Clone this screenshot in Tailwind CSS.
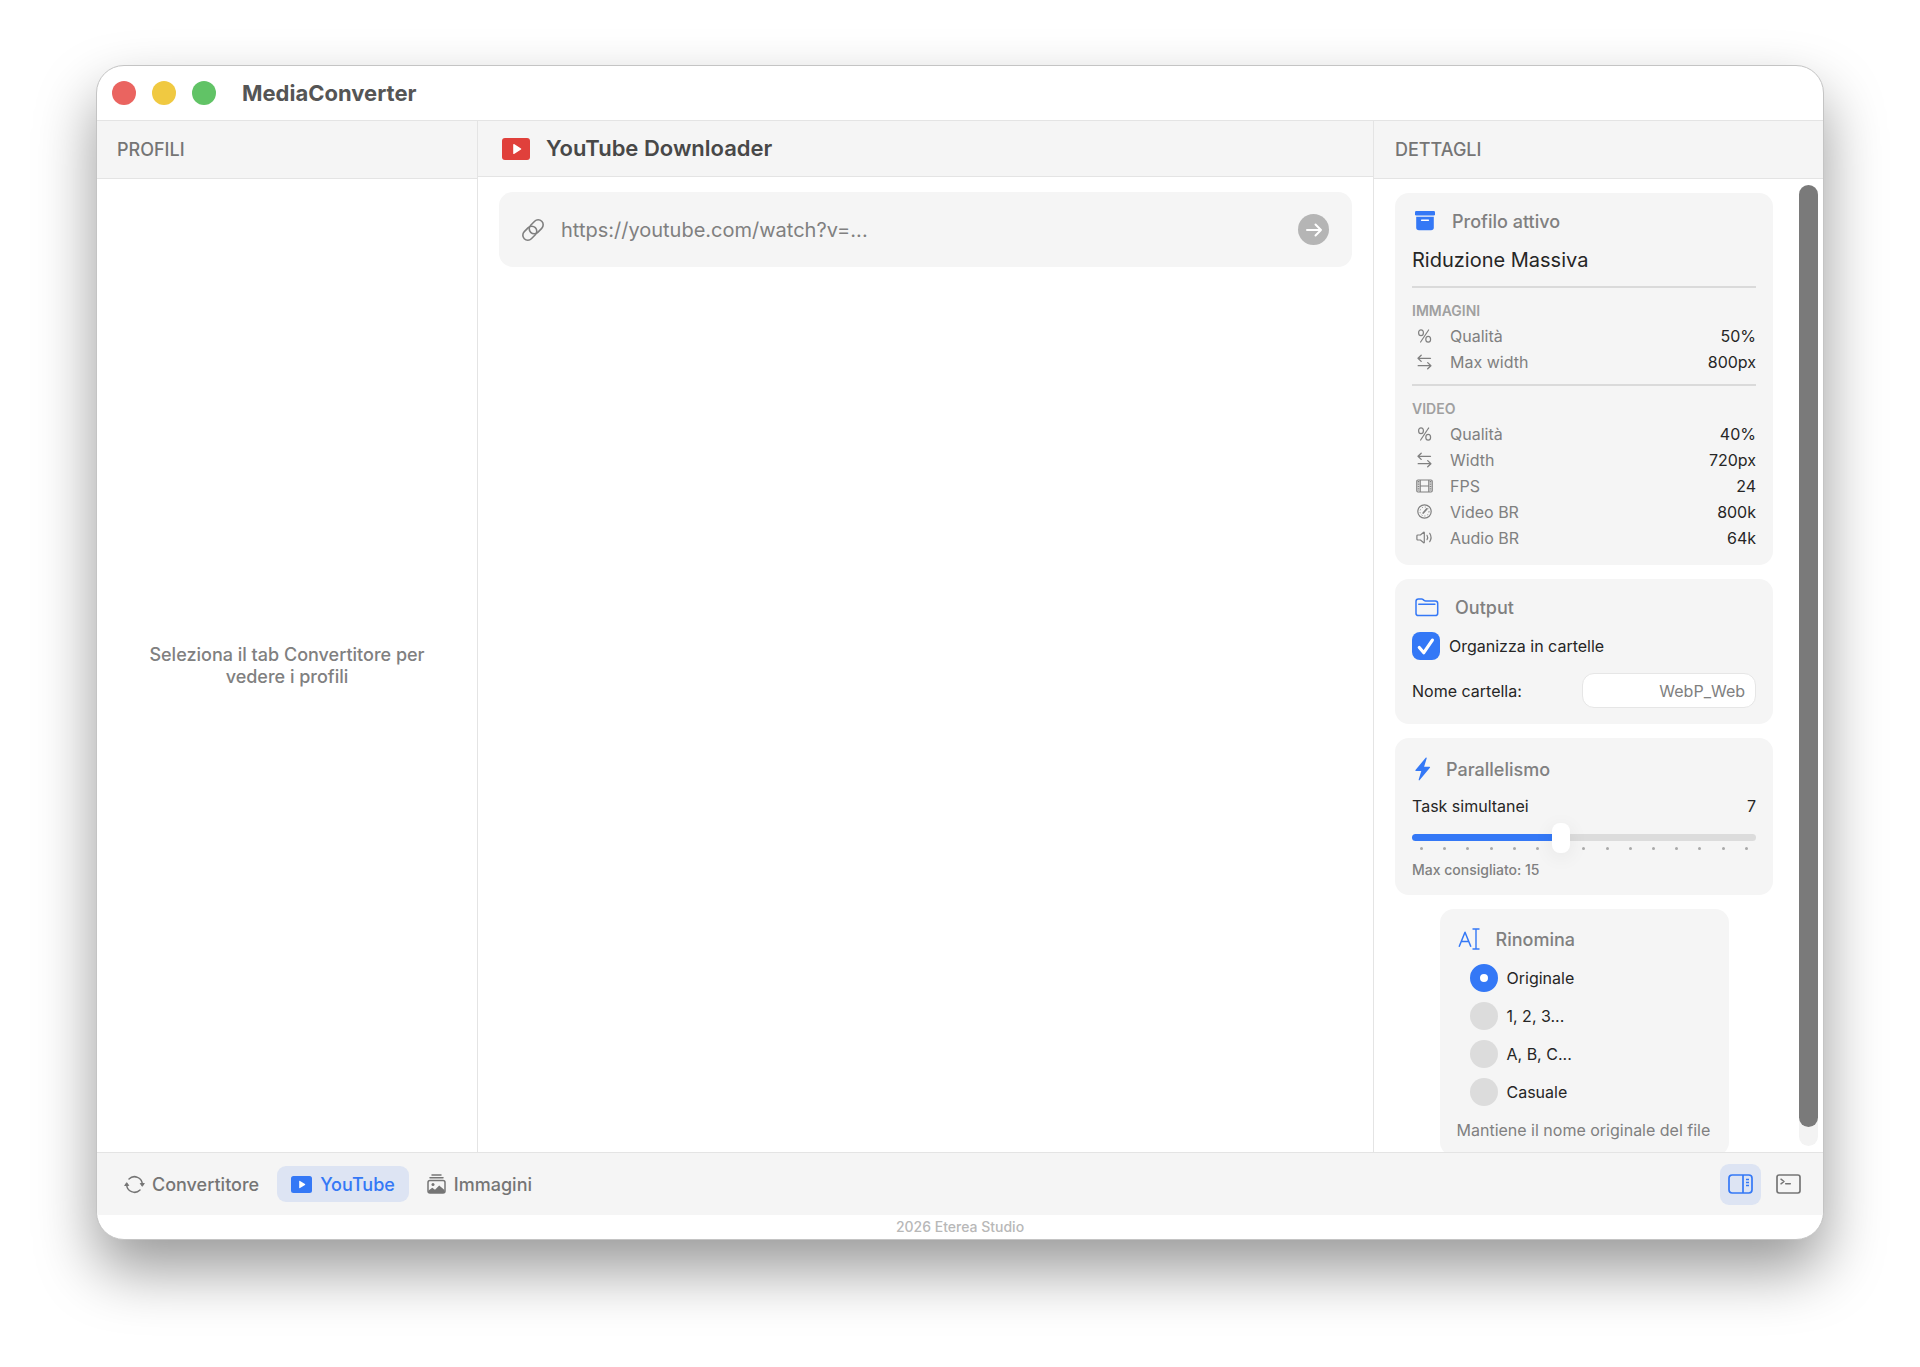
<!DOCTYPE html>
<html lang="it">
<head>
  <meta charset="UTF-8">
  <meta name="viewport" content="width=device-width, initial-scale=1.0">
  <title>MediaConverter</title>
  <script src="https://cdn.jsdelivr.net/npm/@tailwindcss/browser@4"></script>
</head>
<body class="h-screen overflow-hidden bg-white px-24 pt-[65px] pb-[127px] font-['Inter',sans-serif] text-[#262626]">
  <div class="flex h-full flex-col overflow-hidden rounded-[28px] border border-[#c4c4c4] bg-white shadow-[0_30px_60px_rgba(0,0,0,0.4)]">

    <!-- Title bar -->
    <header class="flex h-[55px] shrink-0 items-center border-b border-[#e4e4e4] pl-[15px]">
      <div class="flex gap-4">
        <button aria-label="Chiudi" class="size-6 rounded-full bg-[#ea6460]"></button>
        <button aria-label="Riduci" class="size-6 rounded-full bg-[#f0c941]"></button>
        <button aria-label="Ingrandisci" class="size-6 rounded-full bg-[#61c366]"></button>
      </div>
      <h1 class="ml-[26px] text-[22px] font-bold text-[#555555]">MediaConverter</h1>
    </header>

    <div class="flex min-h-0 flex-1">
      <!-- Profiles -->
      <aside class="flex w-[381px] shrink-0 flex-col border-r border-[#e4e4e4]">
        <h2 class="flex h-[58px] shrink-0 items-center border-b border-[#e4e4e4] bg-[#f5f5f5] pl-5 text-[18px] font-medium text-[#757575]">PROFILI</h2>
        <div class="flex flex-1 items-center justify-center px-12">
          <p class="text-center text-[18px] leading-[22px] font-medium text-[#808080]">Seleziona il tab Convertitore per<br>vedere i profili</p>
        </div>
      </aside>

      <!-- Downloader -->
      <main class="min-w-0 flex-1">
        <div class="flex h-14 items-center gap-4 border-b border-[#e4e4e4] bg-[#f5f5f5] pl-6">
          <svg class="h-[22px] w-7" viewBox="0 0 28 22"><rect width="28" height="22" rx="3" fill="#e0403b"/><path d="M11.200 6.600v8.800c0 .5.500.7.900.5l6.900-4.300c.4-.3.400-.8 0-1.100L12.100 6.100c-.4-.2-.9 0-.9.500z" fill="#fff"/></svg>
          <h2 class="text-[22px] font-semibold text-[#484848]">YouTube Downloader</h2>
        </div>
        <form class="mx-[21px] mt-[15px] flex h-[75px] items-center rounded-[14px] bg-[#f5f5f5] pr-[23px] pl-[22px]">
          <svg class="size-6 shrink-0" viewBox="0 0 24 24" fill="none" stroke="#7f7f7f" stroke-width="1.600"><rect x="-7.800" y="-5" width="15.600" height="10" rx="5" transform="translate(15.200 8.800) rotate(-45)"/><rect x="-7.800" y="-5" width="15.600" height="10" rx="5" transform="translate(8.800 15.200) rotate(-45)"/></svg>
          <input type="text" aria-label="URL del video" placeholder="https://youtube.com/watch?v=..." class="ml-4 min-w-0 flex-1 text-[20px] outline-none placeholder:text-[#808080]">
          <button type="button" aria-label="Avvia" class="flex size-[31px] items-center justify-center rounded-full bg-[#b5b5b5]">
            <svg class="size-[18px]" viewBox="0 0 18 18" fill="none" stroke="#fff" stroke-width="2" stroke-linecap="round" stroke-linejoin="round"><path d="M2 9h14M10.500 3.500 16 9l-5.500 5.500"/></svg>
          </button>
        </form>
      </main>

      <!-- Details -->
      <aside class="flex w-[450px] shrink-0 flex-col border-l border-[#e4e4e4]">
        <h2 class="flex h-[58px] shrink-0 items-center border-b border-[#e4e4e4] bg-[#f5f5f5] pl-[21px] text-[18px] font-medium text-[#757575]">DETTAGLI</h2>
        <div class="flex min-h-0 flex-1 pr-[5px]">
          <div class="flex min-w-0 flex-1 flex-col gap-[14px] overflow-hidden pt-[14px] pr-[26px] pl-[21px] text-[16px]">

            <section class="shrink-0 rounded-[14px] bg-[#f5f5f5] px-[17px] pt-4 pb-[14px]">
              <h3 class="flex h-6 items-center gap-[17px] pl-[3px] text-[18px] font-medium text-[#808080]">
                <svg class="size-5" viewBox="0 0 20 20" fill="#3478f6"><rect width="20" height="4.400" rx="1.200"/><path d="M1.200 5.800h17.600v10.700a2.800 2.800 0 0 1-2.800 2.800H4a2.800 2.800 0 0 1-2.800-2.800z"/><path d="M6.600 9.300h6.800" stroke="#fff" stroke-width="1.400" stroke-linecap="round"/></svg>
                Profilo attivo
              </h3>
              <p class="mt-[13px] text-[20px] leading-7">Riduzione Massiva</p>
              <hr class="mt-3 border-t-2 border-[#dadada]">
              <h4 class="mt-[11px] text-[14px] leading-6 font-semibold text-[#a0a0a0]">IMMAGINI</h4>
              <dl>
                <div class="flex h-[26px] items-center">
                  <dt class="flex items-center gap-[15px] pl-[3px] text-[#808080]">
                    <svg class="size-5" viewBox="0 0 20 20" fill="none" stroke="#808080" stroke-width="1.200" stroke-linecap="round"><ellipse cx="6" cy="6.700" rx="2.400" ry="2.900"/><ellipse cx="13.200" cy="13.300" rx="2.400" ry="2.900"/><path d="M13.600 4 5.600 16"/></svg>
                    Qualità
                  </dt>
                  <dd class="ml-auto">50%</dd>
                </div>
                <div class="flex h-[26px] items-center">
                  <dt class="flex items-center gap-[15px] pl-[3px] text-[#808080]">
                    <svg class="size-5" viewBox="0 0 20 20" fill="none" stroke="#808080" stroke-width="1.300" stroke-linecap="round" stroke-linejoin="round"><path d="M15.500 6.300H3.200M6.200 3.200 3 6.300l3.200 3.100M3.200 13.700h12.600M12.700 10.600l3.200 3.100-3.200 3.100"/></svg>
                    Max width
                  </dt>
                  <dd class="ml-auto">800px</dd>
                </div>
              </dl>
              <hr class="mt-[9px] border-t-2 border-[#dadada]">
              <h4 class="mt-[11px] text-[14px] leading-6 font-semibold text-[#a0a0a0]">VIDEO</h4>
              <dl>
                <div class="flex h-[26px] items-center">
                  <dt class="flex items-center gap-[15px] pl-[3px] text-[#808080]">
                    <svg class="size-5" viewBox="0 0 20 20" fill="none" stroke="#808080" stroke-width="1.200" stroke-linecap="round"><ellipse cx="6" cy="6.700" rx="2.400" ry="2.900"/><ellipse cx="13.200" cy="13.300" rx="2.400" ry="2.900"/><path d="M13.600 4 5.600 16"/></svg>
                    Qualità
                  </dt>
                  <dd class="ml-auto">40%</dd>
                </div>
                <div class="flex h-[26px] items-center">
                  <dt class="flex items-center gap-[15px] pl-[3px] text-[#808080]">
                    <svg class="size-5" viewBox="0 0 20 20" fill="none" stroke="#808080" stroke-width="1.300" stroke-linecap="round" stroke-linejoin="round"><path d="M15.500 6.300H3.200M6.200 3.200 3 6.300l3.200 3.100M3.200 13.700h12.600M12.700 10.600l3.200 3.100-3.200 3.100"/></svg>
                    Width
                  </dt>
                  <dd class="ml-auto">720px</dd>
                </div>
                <div class="flex h-[26px] items-center">
                  <dt class="flex items-center gap-[15px] pl-[3px] text-[#808080]">
                    <svg class="size-5" viewBox="0 0 20 20" fill="none" stroke="#808080" stroke-width="1.200"><rect x="1.800" y="4" width="15.400" height="12" rx="1.200"/><path d="M5.200 4v12M13.800 4v12M5.200 10h8.600"/><path d="M3.500 5v10M15.500 5v10" stroke-width="1.600" stroke-dasharray="1.400 1"/></svg>
                    FPS
                  </dt>
                  <dd class="ml-auto">24</dd>
                </div>
                <div class="flex h-[26px] items-center">
                  <dt class="flex items-center gap-[15px] pl-[3px] text-[#808080]">
                    <svg class="size-5" viewBox="0 0 20 20" fill="none" stroke="#808080" stroke-width="1.200"><circle cx="9.500" cy="9.500" r="6.700"/><circle cx="9.500" cy="9.500" r="4.500" stroke-width="1" stroke-dasharray="1 2"/><path d="m8.200 11 3.600-4.100" stroke-width="1.700" stroke-linecap="round"/></svg>
                    Video BR
                  </dt>
                  <dd class="ml-auto">800k</dd>
                </div>
                <div class="flex h-[26px] items-center">
                  <dt class="flex items-center gap-[15px] pl-[3px] text-[#808080]">
                    <svg class="size-5" viewBox="0 0 20 20" fill="none" stroke="#808080" stroke-width="1.200" stroke-linecap="round" stroke-linejoin="round"><path d="M2.900 7h2.500l3.300-2.700c.3-.2.600 0 .6.300v9.800c0 .3-.3.500-.6.300L5.400 12H2.900c-.6 0-1-.4-1-1V8c0-.6.400-1 1-1z"/><path d="M12 7.300c.8 1.300.8 3.100 0 4.400M14.700 5.300c1.600 2.500 1.600 5.900 0 8.400"/></svg>
                    Audio BR
                  </dt>
                  <dd class="ml-auto">64k</dd>
                </div>
              </dl>
            </section>

            <section class="shrink-0 rounded-[14px] bg-[#f5f5f5] px-[17px] pt-4 pb-4">
              <h3 class="flex h-6 items-center gap-4 pl-[3px] text-[18px] font-medium text-[#808080]">
                <svg class="h-[19px] w-6" viewBox="0 0 24 19" fill="none" stroke="#3478f6" stroke-width="1.500" stroke-linejoin="round" stroke-linecap="round"><path d="M1 3.400C1 1.900 1.900 1 3.400 1h3.300c.6 0 1 .2 1.500.6l.9.800c.5.400.9.600 1.500.6h9.600c1.600 0 2.500.9 2.500 2.400v9.800c0 1.500-.9 2.400-2.500 2.400H3.400C1.900 17.600 1 16.700 1 15.200zM3.800 6.200h16.100"/></svg>
                Output
              </h3>
              <label class="mt-[13px] flex items-center gap-[9px]">
                <span class="grid size-7">
                  <input type="checkbox" checked class="col-start-1 row-start-1 size-7 appearance-none rounded-lg bg-[#dcdcdc] checked:bg-[#3478f6]">
                  <svg class="pointer-events-none col-start-1 row-start-1 size-7" viewBox="0 0 28 28" fill="none" stroke="#fff" stroke-width="3.200" stroke-linecap="round" stroke-linejoin="round"><path d="m7.300 15.500 4.500 5.200 8.600-12.600"/></svg>
                </span>
                Organizza in cartelle
              </label>
              <div class="mt-[13px] flex items-center justify-between">
                <label for="folder">Nome cartella:</label>
                <input id="folder" type="text" value="WebP_Web" class="h-[35px] w-[174px] rounded-xl border border-[#e6e6e6] bg-white px-[10px] text-right text-[#808080] outline-none">
              </div>
            </section>

            <section class="shrink-0 rounded-[14px] bg-[#f5f5f5] px-[17px] pt-[17px] pb-[15px]">
              <h3 class="flex h-7 items-center gap-[15px] pl-[3px] text-[18px] font-medium text-[#808080]">
                <svg class="h-6 w-4" viewBox="0 0 16 24" fill="#3478f6"><path d="M10.700.700.500 13c-.4.500-.2 1 .4 1h5.400L3.700 22.500c-.2.900.5 1.200 1 .6L14.900 10.800c.4-.5.2-1-.4-1H9.100l2.600-8.500c.2-.9-.5-1.200-1-.6z"/></svg>
                Parallelismo
              </h3>
              <div class="mt-[11px] flex justify-between leading-6">
                <label for="tasks">Task simultanei</label>
                <output for="tasks">7</output>
              </div>
              <input id="tasks" type="range" min="1" max="15" value="7" class="mt-4 block h-[7px] w-full appearance-none rounded-full bg-[linear-gradient(to_right,#3478f6_43%,#dcdcdc_43%)] [&::-webkit-slider-thumb]:h-[30px] [&::-webkit-slider-thumb]:w-[18px] [&::-webkit-slider-thumb]:appearance-none [&::-webkit-slider-thumb]:rounded-lg [&::-webkit-slider-thumb]:bg-white [&::-webkit-slider-thumb]:shadow-[0_4px_20px_rgba(0,0,0,0.07)]">
              <div class="mt-[6px] flex justify-between px-2">
                <i class="size-[3px] rounded-full bg-[#aaaaaa]"></i>
                <i class="size-[3px] rounded-full bg-[#aaaaaa]"></i>
                <i class="size-[3px] rounded-full bg-[#aaaaaa]"></i>
                <i class="size-[3px] rounded-full bg-[#aaaaaa]"></i>
                <i class="size-[3px] rounded-full bg-[#aaaaaa]"></i>
                <i class="size-[3px] rounded-full bg-[#aaaaaa]"></i>
                <i class="size-[3px] rounded-full"></i>
                <i class="size-[3px] rounded-full bg-[#aaaaaa]"></i>
                <i class="size-[3px] rounded-full bg-[#aaaaaa]"></i>
                <i class="size-[3px] rounded-full bg-[#aaaaaa]"></i>
                <i class="size-[3px] rounded-full bg-[#aaaaaa]"></i>
                <i class="size-[3px] rounded-full bg-[#aaaaaa]"></i>
                <i class="size-[3px] rounded-full bg-[#aaaaaa]"></i>
                <i class="size-[3px] rounded-full bg-[#aaaaaa]"></i>
                <i class="size-[3px] rounded-full bg-[#aaaaaa]"></i>
              </div>
              <p class="mt-[10px] text-[14px] leading-5 font-medium text-[#808080]">Max consigliato: 15</p>
            </section>

            <section class="w-[289px] shrink-0 self-center rounded-[14px] bg-[#f5f5f5] px-[17px] py-4">
              <h3 class="flex h-7 items-center gap-4 pl-[1px] text-[18px] font-medium text-[#808080]">
                <svg class="h-[22px] w-[22px]" viewBox="0 0 22 22" fill="none" stroke="#3478f6" stroke-width="1.500" stroke-linecap="round" stroke-linejoin="round"><path d="M1.300 18.200 7 4.200l5.700 14M3.200 13.600h7.600"/><path d="M15 1h6M15 21h6M18 1v20" stroke-width="1.400"/></svg>
                Rinomina
              </h3>
              <div class="mt-[11px] flex flex-col gap-[10px] pl-[13px]">
                <label class="flex items-center gap-[9px]">
                  <input type="radio" name="rename" checked class="size-7 appearance-none rounded-full bg-[#dcdcdc] checked:border-[10px] checked:border-[#3478f6] checked:bg-white">
                  Originale
                </label>
                <label class="flex items-center gap-[9px]">
                  <input type="radio" name="rename" class="size-7 appearance-none rounded-full bg-[#dcdcdc] checked:border-[10px] checked:border-[#3478f6] checked:bg-white">
                  1, 2, 3...
                </label>
                <label class="flex items-center gap-[9px]">
                  <input type="radio" name="rename" class="size-7 appearance-none rounded-full bg-[#dcdcdc] checked:border-[10px] checked:border-[#3478f6] checked:bg-white">
                  A, B, C...
                </label>
                <label class="flex items-center gap-[9px]">
                  <input type="radio" name="rename" class="size-7 appearance-none rounded-full bg-[#dcdcdc] checked:border-[10px] checked:border-[#3478f6] checked:bg-white">
                  Casuale
                </label>
              </div>
              <p class="mt-[14px] leading-5 whitespace-nowrap text-[#808080]">Mantiene il nome originale del file</p>
            </section>
          </div>

          <!-- Scrollbar -->
          <div class="my-[6px] w-[19px] rounded-full bg-[#f3f3f3]">
            <div class="h-[98%] rounded-full bg-[#7a7a7a]"></div>
          </div>
        </div>
      </aside>
    </div>

    <!-- Tab bar -->
    <nav class="flex h-[63px] shrink-0 items-center border-t border-[#e4e4e4] bg-[#f5f5f5] pr-[14px] pl-[13px]">
      <div class="flex gap-1 text-[18px] font-medium text-[#757575]">
        <button class="flex h-9 items-center gap-[7px] rounded-[9px] px-[14px]">
          <svg class="size-[21px]" viewBox="0 0 21 21" fill="none" stroke="#757575" stroke-width="1.500" stroke-linecap="round"><path d="M5 5A7.800 7.800 0 0 1 18.300 10.500M16 16A7.800 7.800 0 0 1 2.700 10.500"/><path d="M.9 11.200 2.700 8.700l1.800 2.500zM20.100 9.800l-1.800 2.500-1.800-2.500z" fill="#757575" stroke-width="1" stroke-linejoin="round"/></svg>
          Convertitore
        </button>
        <button class="flex h-9 items-center gap-2 rounded-[9px] bg-[#dde4f3] px-[14px] text-[#3478f6]">
          <svg class="h-[17px] w-[21px]" viewBox="0 0 21 17"><rect width="21" height="17" rx="2.500" fill="#3478f6"/><path d="M8.200 5.300v6.400c0 .5.400.7.800.4l5-3.200c.3-.2.300-.6 0-.8l-5-3.200c-.4-.3-.8-.1-.8.400z" fill="#fff"/></svg>
          YouTube
        </button>
        <button class="flex h-9 items-center gap-2 rounded-[9px] px-[14px]">
          <svg class="h-5 w-[19px]" viewBox="0 0 19 20" fill="none" stroke="#757575" stroke-width="1.500" stroke-linecap="round"><path d="M5 1h9M3 3.800h13"/><rect x="1" y="6.500" width="17" height="12.500" rx="2"/><circle cx="6" cy="10.500" r="1.500" fill="#757575" stroke="none"/><path d="m1.500 16.500 3.800-2.700 2.700 1.900 4.200-4.200 5.300 4.500v2.200c0 .6-.4.800-1 .8h-14c-.6 0-1-.4-1-.8z" fill="#757575" stroke="none"/></svg>
          Immagini
        </button>
      </div>
      <div class="ml-auto flex gap-[7px]">
        <button aria-label="Pannello dettagli" class="flex size-[41px] items-center justify-center rounded-[9px] bg-[#dde4f3]">
          <svg class="h-5 w-[25px]" viewBox="0 0 25 20" fill="none" stroke="#3478f6" stroke-width="1.700"><rect x="1" y="1" width="23" height="18" rx="3.200"/><path d="M15 1v18"/><path d="M18 5.500h3M18 8.500h3M18 11.500h3" stroke-width="1.300"/></svg>
        </button>
        <button aria-label="Console" class="flex size-[41px] items-center justify-center rounded-[9px]">
          <svg class="h-5 w-[25px]" viewBox="0 0 25 20" fill="none" stroke="#757575" stroke-width="1.700"><rect x="1" y="1" width="23" height="18" rx="2.200"/><path d="m5 5.200 3 2.300-3 2.300M9.700 9.800h4.600" stroke-width="1.500" stroke-linecap="round" stroke-linejoin="round"/></svg>
        </button>
      </div>
    </nav>

    <footer class="shrink-0 text-center text-[14px] leading-6 font-medium text-[#b8b8b8]">2026 Eterea Studio</footer>
  </div>
</body>
</html>
